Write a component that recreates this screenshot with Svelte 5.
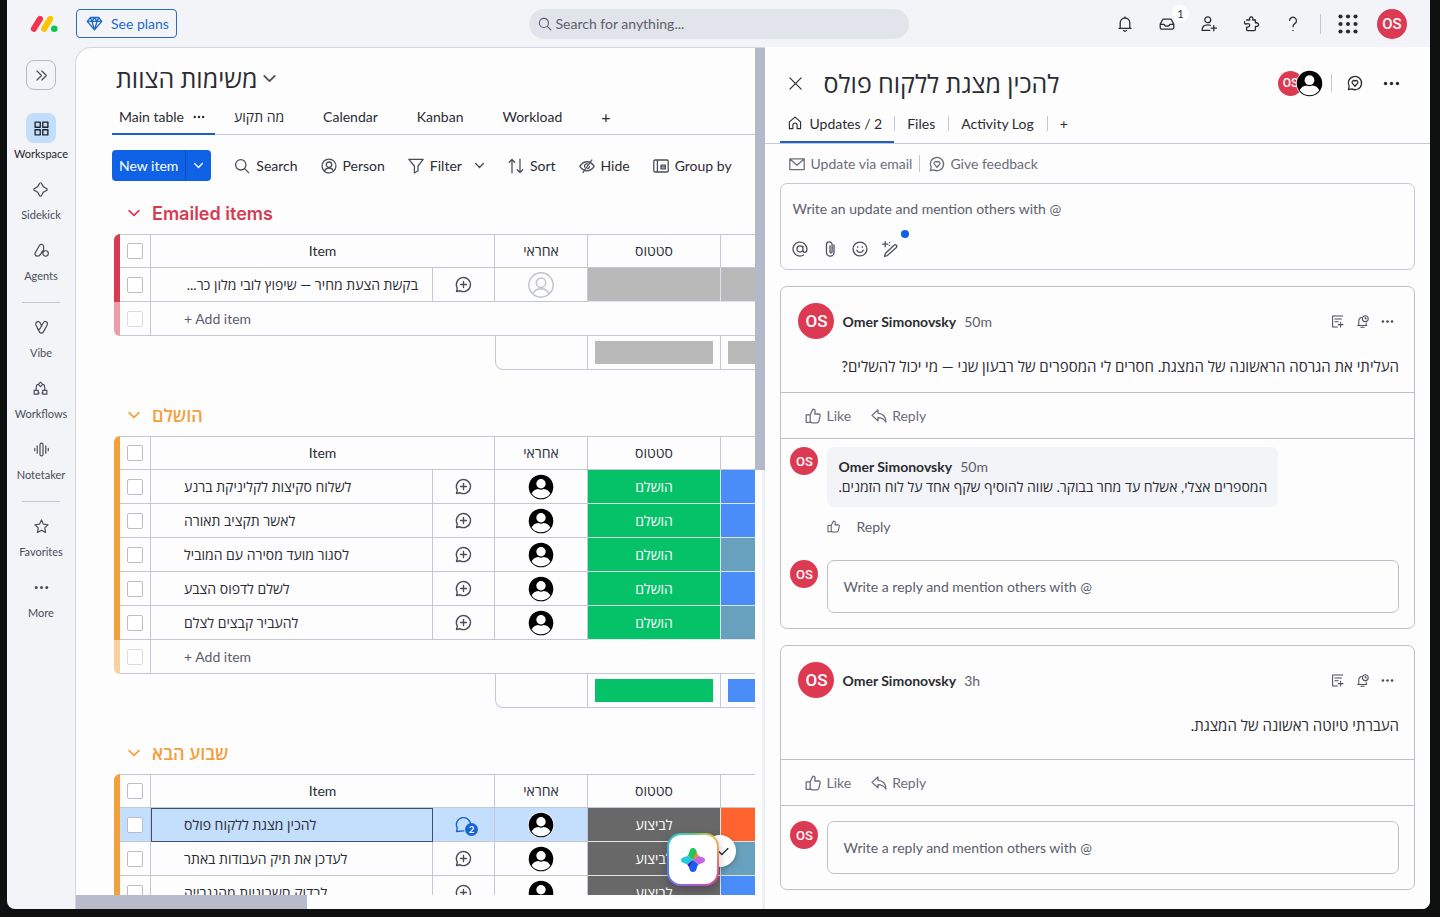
<script lang="ts">
  interface Row {
    name: string;
    status: string;
    statusColor: string;
    priority: string;
    unassigned?: boolean;
    rtl?: boolean;
    updates?: number;
  }

  interface Group {
    title: string;
    color: string;
    faded: string;
    rows: Row[];
  }

  interface Post {
    id: string;
    time: string;
    text: string;
    replies: Array<{ time: string; text: string }>;
  }

  const GREEN = '#05c167';
  const BLUE = '#4b8df8';
  const TEAL = '#68a1bd';
  const GREY = '#b9b9b9';
  const DARK = '#686868';
  const ORANGE = '#ff642e';

  const icons: Record<string, string> = {
    chevron: 'M3 6.500l7 7 7-7',
    expand: 'M4 4l6 6-6 6M10.500 4l6 6-6 6',
    grid: 'M2.500 2.500h6v6h-6zM11.500 2.500h6v6h-6zM2.500 11.500h6v6h-6zM11.500 11.500h6v6h-6z',
    sparkle: 'M10 1c1 0 1.500.7 1.900 2 .7 2.600 2.500 4.400 5.100 5.100 1.300.4 2 .9 2 1.900s-.7 1.500-2 1.900c-2.600.7-4.400 2.500-5.100 5.100-.4 1.300-.9 2-1.900 2s-1.500-.7-1.900-2c-.7-2.600-2.500-4.400-5.100-5.100-1.300-.4-2-.9-2-1.900s.7-1.500 2-1.900c2.600-.7 4.400-2.500 5.100-5.100.4-1.300.9-2 1.900-2z',
    agents: 'M2 12.500L7.200 3.300a3 3 0 0 1 5.600 1.500v5.400M2 12.500a3.100 3.100 0 0 0 2.600 5c2.200 0 3.500-1.200 4.500-3l1.900-3.300M15.500 10.300a3.600 3.600 0 1 0 0 7.200 3.600 3.600 0 0 0 0-7.200zM11.900 14V10.200',
    vibe: 'M10.400 8.200L8.300 4a3.100 3.100 0 0 0-5.700 2.700l4.700 9.100a3 3 0 0 0 5.300 0l5-9.200a3 3 0 0 0-5.200-3L7.700 12a2 2 0 0 1-3.200-.3',
    workflows: 'M10 1.500l3 3-3 3-3-3zM1.500 12.500h5.500v5h-5.500zM13 12.500h5.500v5h-5.500zM7 4.500c-2.200 0-2.800 1-2.800 8M13 4.500c2.200 0 2.800 1 2.800 8M7 16h1.500M11.500 16h1.500',
    notetaker: 'M1 8.500v3M4.300 5v10M15.700 5v10M19 8.500v3M8 3.500a2 2 0 0 1 4 0v13a2 2 0 0 1-4 0z',
    star: 'M10 1.300l2.700 5.600 6 .8-4.400 4.200 1.100 6.100-5.400-3-5.400 3 1.100-6.100L1.300 7.700l6-.8z',
    search: 'M8.500 2a6.500 6.500 0 1 0 0 13 6.500 6.500 0 0 0 0-13zM13.300 13.300l5 5',
    diamond: 'M5 3h10l3.500 4.500L10 17.500 1.500 7.500zM1.500 7.500h17M7 7.500l3 10 3-10M5 3l2 4.500L10 3l3 4.500L15 3',
    bell: 'M2.500 15.500h15M4 15.500V8.500a6 6 0 0 1 12 0V15.500M10 1v1.500M8 18c1 1 3 1 4 0',
    inbox: 'M1.500 10.500L4.200 5A2 2 0 0 1 6 3.800h8a2 2 0 0 1 1.800 1.200l2.700 5.500v4a2 2 0 0 1-2 2h-13a2 2 0 0 1-2-2zM1.500 10.500h5c.5 3 6.500 3 7 0h5',
    invite: 'M8.500 1a3.700 3.700 0 1 0 0 7.400 3.700 3.700 0 0 0 0-7.400zM11 18H1.300c0-4.300 2.900-7 7.200-7 1.300 0 2.300.2 3.200.6M16 12v6.500M12.800 15.200h6.500',
    puzzle: 'M4.500 5h4c-1-2 .1-4 1.800-4s2.800 2 1.800 4h3.400v3.600c2.200-.6 4 .6 4 2.200s-1.800 2.700-4 2.200V17c0 .8-.5 1.300-1.300 1.300H5.800c-.8 0-1.300-.5-1.300-1.300v-3.200c2.500.5 3.800-.7 3.800-2.300S6.800 9 4.500 9.800C2.300 10.500 1.500 9 2 7',
    help: 'M5.700 5.500a4.300 4.300 0 1 1 6.500 4c-1.600 1-2.200 1.700-2.200 3.900M10 18v.1',
    chatHeart: 'M1.800 18.200l.9-4A8.300 8.300 0 1 1 6 17.400zM10 14L6.600 10.200A2.200 2.200 0 0 1 10 7.500a2.200 2.200 0 0 1 3.400 2.700z',
    chatPlus: 'M1.800 18.200l.9-4A8.300 8.300 0 1 1 6 17.400zM10 6.500v7M6.500 10h7',
    chat: 'M10.500 17.500l-8.700.7.9-4a8.300 8.300 0 1 1 15.400-2.500',
    close: 'M2.500 2.500l15 15M17.500 2.500l-15 15',
    person: 'M10 1.300a8.700 8.700 0 1 0 0 17.400 8.700 8.700 0 0 0 0-17.400zM10 5a3.400 3.400 0 1 0 0 6.800A3.400 3.400 0 0 0 10 5zM4.200 16.400c1-2.700 3-3.700 5.800-3.700s4.800 1 5.800 3.700',
    filter: 'M1 1.700h18l-6.500 8.300v6L8 18.700V10z',
    sort: 'M5 18.500V1.800M1.500 5.300L5 1.800l3.500 3.500M15 1.500v16.700M11.500 14.700l3.500 3.500 3.500-3.500',
    hide: 'M1 10.500C3.500 6.500 6.700 4.700 10 4.700s6.500 1.800 9 5.800c-2.500 3.700-5.700 5.500-9 5.500s-6.500-1.800-9-5.500zM16 2.500L5 18M10.500 7.300a3 3 0 0 0-3.300 4.200M13 10.500c0 1.500-.8 2.500-2 2.900',
    groupBy: 'M2.500 2.500h15A1.500 1.500 0 0 1 19 4v12a1.500 1.500 0 0 1-1.500 1.500h-15A1.500 1.500 0 0 1 1 16V4a1.500 1.500 0 0 1 1.500-1.500zM5.500 2.500v15M10 9h5.500v4.500H10zM10 11.200h5.500',
    home: 'M2 8.500L10 1.500l8 7V18h-5v-5a3 3 0 0 0-6 0v5H2z',
    mail: 'M1 3.500h18v13.500H1zM1.500 4l8.500 7.500L18.500 4',
    mention: 'M13.700 6.500v5c0 1.700.8 2.600 2 2.600 1.700 0 3-1.700 3-4.100A8.700 8.700 0 1 0 14.500 17.500M10 6.200a3.800 3.800 0 1 0 0 7.600 3.800 3.800 0 0 0 0-7.600z',
    clip: 'M10 6v7.500a1.300 1.300 0 0 0 2.600 0v-9a3.500 3.500 0 0 0-7 0v9.800a4.700 4.700 0 0 0 9.400 0V5',
    smile: 'M10 1.300a8.700 8.700 0 1 0 0 17.400 8.700 8.700 0 0 0 0-17.400zM6 11.500c.8 2 2.200 2.800 4 2.800s3.200-.8 4-2.800M7.200 7.200v.6M12.800 7.200v.6',
    magic: 'M6.500 18.300l-3.300.9.900-3.500L15 5.300a2 2 0 0 1 2.900 2.800zM4 .8v6.400M.8 4h6.400M9.500 2v.1M9 5.500v.1',
    like: 'M6.500 8.500L9.800 1.500c2 0 3 1 2.800 3L12.300 7.500h4.800c1.400 0 2.100 1 1.800 2.300l-1.500 6.700c-.3 1.300-1.100 2-2.400 2H8.500l-2-1.500zM6.500 8.500H1.500v9.500h5z',
    reply: 'M8.700 2.500L1.200 9.200l7.500 6.700v-3.800c4.500 0 7.500 1.400 10.100 5.500-.3-6.500-4-10.600-10.100-11.200z',
    note: 'M10 18.500H2.500V1.500H18M6 6h10M6 10.500h5M14.800 11v7.500M11 14.800h7.500',
    remind: 'M2.500 16h14M4.300 16V9a5.500 5.500 0 0 1 4-5.300M7.500 19h5M14.300 1.200a4.500 4.500 0 1 0 0 9 4.500 4.500 0 0 0 0-9zM14.300 3.500v2.300h1.700M15.700 12.500V16',
    check: 'M2 10.500l5 5L18 4.500'
  };

  const topActions = [
    { icon: 'bell', label: 'Notifications' },
    { icon: 'inbox', label: 'Update feed', badge: 1 },
    { icon: 'invite', label: 'Invite members' },
    { icon: 'puzzle', label: 'Apps' },
    { icon: 'help', label: 'Help' }
  ];

  const navSections = [
    [
      { icon: 'grid', label: 'Workspace' },
      { icon: 'sparkle', label: 'Sidekick' },
      { icon: 'agents', label: 'Agents' }
    ],
    [
      { icon: 'vibe', label: 'Vibe' },
      { icon: 'workflows', label: 'Workflows' },
      { icon: 'notetaker', label: 'Notetaker' }
    ],
    [
      { icon: 'star', label: 'Favorites' },
      { icon: 'dots', label: 'More' }
    ]
  ];

  const views = ['Main table', 'מה תקוע', 'Calendar', 'Kanban', 'Workload'];

  const tools = [
    { icon: 'search', label: 'Search' },
    { icon: 'person', label: 'Person' },
    { icon: 'filter', label: 'Filter', menu: true },
    { icon: 'sort', label: 'Sort' },
    { icon: 'hide', label: 'Hide' },
    { icon: 'groupBy', label: 'Group by' }
  ];

  function done(name: string, priority: string): Row {
    return { name, status: 'הושלם', statusColor: GREEN, priority };
  }

  function todo(name: string, priority: string, updates = 0): Row {
    return { name, status: 'לביצוע', statusColor: DARK, priority, updates };
  }

  const groups: Group[] = [
    {
      title: 'Emailed items',
      color: '#d83a52',
      faded: '#eb9ca8',
      rows: [
        {
          name: 'בקשת הצעת מחיר — שיפוץ לובי מלון כר...',
          status: '',
          statusColor: GREY,
          priority: GREY,
          unassigned: true,
          rtl: true
        }
      ]
    },
    {
      title: 'הושלם',
      color: '#f2a03d',
      faded: '#fbd0a0',
      rows: [
        done('לשלוח סקיצות לקליניקת ברנע', BLUE),
        done('לאשר תקציב תאורה', BLUE),
        done('לסגור מועד מסירה עם המוביל', TEAL),
        done('לשלם לדפוס הצבע', BLUE),
        done('להעביר קבצים לצלם', TEAL)
      ]
    },
    {
      title: 'שבוע הבא',
      color: '#f2a03d',
      faded: '#fbd0a0',
      rows: [
        todo('להכין מצגת ללקוח פולס', ORANGE, 2),
        todo('לעדכן את תיק העבודות באתר', TEAL),
        todo('לבדוק חשבוניות מהנגרייה', BLUE)
      ]
    }
  ];

  const posts: Post[] = [
    {
      id: 'post-1',
      time: '50m',
      text: 'העליתי את הגרסה הראשונה של המצגת. חסרים לי המספרים של רבעון שני — מי יכול להשלים?',
      replies: [
        { time: '50m', text: 'המספרים אצלי, אשלח עד מחר בבוקר. שווה להוסיף שקף אחד על לוח הזמנים.' }
      ]
    },
    {
      id: 'post-2',
      time: '3h',
      text: 'העברתי טיוטה ראשונה של המצגת.',
      replies: []
    }
  ];

  let activeNav = 'Workspace';
  let activeView = 'Main table';
</script>

{#snippet icon(name, size = 16)}
  <svg class="icon" class:heavy={name === 'chevron' || name === 'check'} width={size} height={size} viewBox="0 0 20 20" aria-hidden="true">
    {#if name === 'dots'}
      <g fill="currentColor" stroke="none">
        <circle cx="3" cy="10" r="2" />
        <circle cx="10" cy="10" r="2" />
        <circle cx="17" cy="10" r="2" />
      </g>
    {:else}
      <path d={icons[name]} />
    {/if}
  </svg>
{/snippet}

{#snippet photo(size)}
  <svg class="photo" width={size} height={size} viewBox="0 0 26 26" role="img" aria-label="Assignee">
    <circle cx="13" cy="13" r="13" fill="#fff" />
    <circle cx="13" cy="13" r="12.300" fill="#000" />
    <circle cx="13" cy="9.800" r="4.700" fill="#fff" />
    <path d="M3.600 19.500c1.600-3.600 4.400-4.300 6.800-4.600 1.600 1 3.600 1 5.200 0 2.400.3 5.200 1 6.800 4.600A11.500 11.500 0 0 1 13 24.300a11.500 11.500 0 0 1-9.400-4.800z" fill="#fff" />
  </svg>
{/snippet}

<div class="window">
  <header class="topbar">
    <div class="brand">
      <svg width="28" height="18" viewBox="0 0 28 18" role="img" aria-label="monday">
        <path d="M3.800 13.800L10 3.800" stroke="#f0344f" stroke-width="6" stroke-linecap="round" />
        <path d="M14 13.800l6.200-10" stroke="#ffc400" stroke-width="6" stroke-linecap="round" />
        <circle cx="24.300" cy="13.800" r="3.300" fill="#10c64f" />
      </svg>
      <button class="plans">{@render icon('diamond', 17)}See plans</button>
    </div>
    <label class="global-search">
      {@render icon('search', 14)}
      <input type="search" placeholder="Search for anything..." aria-label="Search for anything" />
    </label>
    <div class="top-actions">
      {#each topActions as action}
        <button class="icon-btn" aria-label={action.label}>
          {@render icon(action.icon, 16)}
          {#if action.badge}
            <span class="count">{action.badge}</span>
          {/if}
        </button>
      {/each}
      <span class="top-divider"></span>
      <button class="apps" aria-label="Products">
        <svg width="20" height="20" viewBox="0 0 20 20" fill="currentColor">
          {#each [2.5, 10, 17.5] as cy}
            {#each [2.5, 10, 17.5] as cx}
              <circle {cx} {cy} r="2.100" />
            {/each}
          {/each}
        </svg>
      </button>
      <span class="avatar avatar-30">OS</span>
    </div>
  </header>

  <div class="body">
    <nav class="sidebar">
      <button class="expand" aria-label="Expand navigation">{@render icon('expand', 15)}</button>
      {#each navSections as section, i}
        {#if i > 0}
          <hr />
        {/if}
        {#each section as item}
          <button class="nav-item" class:active={activeNav === item.label} on:click={() => (activeNav = item.label)}>
            <span class="nav-icon">{@render icon(item.icon, item.icon === 'grid' ? 17 : 15)}</span>
            {item.label}
          </button>
        {/each}
      {/each}
    </nav>

    <main class="board">
      <div class="board-main">
        <div class="board-content">
          <h1>משימות הצוות <button class="plain" aria-label="Board menu">{@render icon('chevron', 15)}</button></h1>

          <div class="views">
            {#each views as view}
              <button class="view" class:active={activeView === view} on:click={() => (activeView = view)}>
                {view}
                {#if activeView === view}
                  {@render icon('dots', 12)}
                {/if}
              </button>
            {/each}
            <button class="view add" aria-label="Add view">+</button>
          </div>

          <div class="toolbar">
            <div class="new-item">
              <button>New item</button>
              <button class="new-menu" aria-label="More item options">{@render icon('chevron', 11)}</button>
            </div>
            {#each tools as tool}
              <button class="tool">
                {@render icon(tool.icon, 16)}
                {tool.label}
                {#if tool.menu}
                  <span class="tool-menu">{@render icon('chevron', 11)}</span>
                {/if}
              </button>
            {/each}
          </div>

          {#each groups as group}
            <section class="group" style="--group: {group.color}; --faded: {group.faded}">
              <h2>
                <button class="plain" aria-label="Collapse group">{@render icon('chevron', 14)}</button>
                {group.title}
              </h2>
              <table>
                <colgroup>
                  <col class="c-accent" />
                  <col class="c-check" />
                  <col class="c-name" />
                  <col class="c-chat" />
                  <col class="c-owner" />
                  <col class="c-status" />
                  <col class="c-status" />
                </colgroup>
                <thead>
                  <tr>
                    <td class="accent"></td>
                    <td class="check"><input type="checkbox" aria-label="Select all" /></td>
                    <th colspan="2">Item</th>
                    <th>אחראי</th>
                    <th>סטטוס</th>
                    <th></th>
                  </tr>
                </thead>
                <tbody>
                  {#each group.rows as row}
                    <tr class:selected={row.updates}>
                      <td class="accent"></td>
                      <td class="check"><input type="checkbox" aria-label={row.name} /></td>
                      <td class="name" class:rtl={row.rtl}>{row.name}</td>
                      <td class="chat">
                        <button class="plain" aria-label="Updates">
                          {#if row.updates}
                            {@render icon('chat', 17)}
                            <span class="updates">{row.updates}</span>
                          {:else}
                            {@render icon('chatPlus', 17)}
                          {/if}
                        </button>
                      </td>
                      <td class="owner">
                        {#if row.unassigned}
                          <span class="nobody">{@render icon('person', 28)}</span>
                        {:else}
                          {@render photo(26)}
                        {/if}
                      </td>
                      <td class="status" style="background: {row.statusColor}">{row.status}</td>
                      <td class="status" style="background: {row.priority}"></td>
                    </tr>
                  {/each}
                  <tr class="add-row">
                    <td class="accent"></td>
                    <td class="check"><input type="checkbox" disabled aria-label="New item" /></td>
                    <td class="add-cell" colspan="5"><button class="plain">+ Add item</button></td>
                  </tr>
                </tbody>
                <tfoot>
                  <tr>
                    <td class="blank" colspan="4"></td>
                    <td class="summary-first"></td>
                    <td><div class="bar" style="background: {group.rows[0].statusColor}"></div></td>
                    <td><div class="bar" style="background: {group.rows[0].priority}"></div></td>
                  </tr>
                </tfoot>
              </table>
            </section>
          {/each}
        </div>
        <div class="hbar"><div class="hthumb"></div></div>
      </div>
      <div class="vbar"><div class="vthumb"></div></div>

      <div class="floating">
        <button class="done" aria-label="Mark as done">{@render icon('check', 11)}</button>
        <button class="assistant" aria-label="Sidekick">
          <svg width="26" height="26" viewBox="0 0 26 26">
            <path d="M13 1c2.400 0 3.200 1.700 3.800 4.300.4 1.700 1 2.800 1.800 3.500L13 13 7.400 8.800c.8-.7 1.400-1.800 1.800-3.500C9.800 2.700 10.600 1 13 1z" fill="#22c55e" />
            <path d="M13 13l5.600-4.200c.7.600 1.600.9 2.600 1.100 2.600.4 3.800 1.300 3.800 3.100s-1.300 2.800-3.800 3.400c-1 .2-1.900.6-2.600 1.200z" fill="#c861e6" />
            <path d="M7.400 8.800L13 13l-5.600 4.600c-.7-.6-1.600-1-2.600-1.200C2.300 15.800 1 14.800 1 13s1.200-2.700 3.800-3.100c1-.2 1.900-.5 2.600-1.100z" fill="#22c7e0" />
            <path d="M13 13l5.600 4.600c-.8.7-1.400 1.700-1.800 3.300-.6 2.600-1.400 4.100-3.800 4.100s-3.200-1.500-3.800-4.100c-.4-1.600-1-2.600-1.800-3.300z" fill="#1f5cf0" />
            <path d="M13 13l3.500-8.600c.5 2.400 1.200 3.600 2.100 4.400z" fill="#f08a24" />
            <path d="M13 13l-5.600 4.600c.7.600 1.300 1.500 1.600 2.700L13 13z" fill="#3f1fb8" />
          </svg>
        </button>
      </div>
    </main>

    <aside class="panel">
      <div class="panel-head">
        <button class="plain" aria-label="Close">{@render icon('close', 15)}</button>
        <h2>להכין מצגת ללקוח פולס</h2>
        <div class="members">
          <span class="avatar avatar-25">OS</span>
          {@render photo(27)}
        </div>
        <span class="head-divider"></span>
        <button class="plain feedback" aria-label="Give feedback">{@render icon('chatHeart', 16)}</button>
        <button class="plain" aria-label="Item menu">{@render icon('dots', 17)}</button>
      </div>

      <div class="panel-tabs">
        <button class="tab active">{@render icon('home', 14)}Updates / 2</button>
        <button class="tab">Files</button>
        <button class="tab">Activity Log</button>
        <button class="tab" aria-label="Add tab">+</button>
      </div>

      <div class="panel-body">
        <div class="links">
          <button class="plain">{@render icon('mail', 16)}Update via email</button>
          <button class="plain">{@render icon('chatHeart', 16)}Give feedback</button>
        </div>

        <div class="composer">
          <textarea rows="1" placeholder="Write an update and mention others with @" aria-label="Write an update"></textarea>
          <div class="composer-tools">
            <button class="plain" aria-label="Mention">{@render icon('mention', 16)}</button>
            <button class="plain" aria-label="Attach file">{@render icon('clip', 16)}</button>
            <button class="plain" aria-label="Emoji">{@render icon('smile', 16)}</button>
            <button class="plain magic" aria-label="Writing assistant">{@render icon('magic', 16)}</button>
          </div>
        </div>

        {#each posts as post}
          <article class="post">
            <header class="post-head">
              <span class="avatar avatar-36">OS</span>
              <strong>Omer Simonovsky</strong>
              <span class="time">{post.time}</span>
              <div class="post-tools">
                <button class="plain" aria-label="Create doc">{@render icon('note', 13)}</button>
                <button class="plain" aria-label="Remind me">{@render icon('remind', 13)}</button>
                <button class="plain" aria-label="Post menu">{@render icon('dots', 13)}</button>
              </div>
            </header>
            <p class="post-text" class:roomy={post.replies.length === 0} dir="rtl">{post.text}</p>
            <div class="post-actions">
              <button class="plain">{@render icon('like', 16)}Like</button>
              <button class="plain">{@render icon('reply', 16)}Reply</button>
            </div>
            {#each post.replies as reply}
              <div class="reply">
                <span class="avatar avatar-28">OS</span>
                <div>
                  <div class="bubble">
                    <strong>Omer Simonovsky</strong><span class="time">{reply.time}</span>
                    <p dir="rtl">{reply.text}</p>
                  </div>
                  <div class="reply-actions">
                    <button class="plain" aria-label="Like">{@render icon('like', 13)}</button>
                    <button class="plain">Reply</button>
                  </div>
                </div>
              </div>
            {/each}
            <div class="reply-box">
              <span class="avatar avatar-28">OS</span>
              <input type="text" id={post.id} placeholder="Write a reply and mention others with @" aria-label="Write a reply" />
            </div>
          </article>
        {/each}
      </div>
    </aside>
  </div>
</div>

<style>
  :global(body) {
    background: #0f1010;
  }

  .window {
    --line: #c5c8d4;
    --muted: #5c5e6c;
    --text: #2b2c32;
    --red: #dc3a52;
    display: flex;
    flex-direction: column;
    box-sizing: border-box;
    height: calc(100vh - 8px);
    margin: 0 10px 8px 7px;
    overflow: hidden;
    border-radius: 0 0 8px 8px;
    background: #f2f4f8;
    color: var(--text);
    font-family: Lato, 'Open Sans', sans-serif;
    font-size: 14px;
  }

  button,
  input,
  textarea {
    font: inherit;
    color: inherit;
  }

  button {
    display: inline-flex;
    align-items: center;
    padding: 0;
    border: none;
    background: none;
    cursor: pointer;
    white-space: nowrap;
  }

  h1,
  h2,
  p {
    margin: 0;
  }

  .icon {
    flex: none;
    fill: none;
    stroke: currentColor;
    stroke-width: 1.6;
    stroke-linecap: round;
    stroke-linejoin: round;
    overflow: visible;
  }

  .icon.heavy {
    stroke-width: 2.4;
  }

  .photo {
    display: block;
    flex: none;
  }

  .avatar {
    display: inline-flex;
    flex: none;
    align-items: center;
    justify-content: center;
    border-radius: 50%;
    background: var(--red);
    color: #fff;
    font-family: Roboto, sans-serif;
    font-weight: 500;
  }

  .avatar-25 { width: 25px; height: 25px; font-size: 12px; }
  .avatar-28 { width: 28px; height: 28px; font-size: 13px; }
  .avatar-30 { width: 30px; height: 30px; font-size: 15px; }
  .avatar-36 { width: 36px; height: 36px; font-size: 17px; }

  /* Top bar */
  .topbar {
    display: grid;
    grid-template-columns: 1fr minmax(200px, 380px) 1fr;
    align-items: center;
    flex: none;
    height: 47px;
    padding: 0 23px;
  }

  .brand {
    display: flex;
    align-items: center;
    gap: 18px;
  }

  .plans {
    gap: 8px;
    height: 29px;
    padding: 0 7px 0 9px;
    border: 1px solid #2a6cc4;
    border-radius: 4px;
    color: #1f68c9;
  }

  .global-search {
    display: flex;
    align-items: center;
    gap: 4px;
    height: 30px;
    padding: 0 9px;
    border-radius: 15px;
    background: #e1e4ea;
    color: var(--muted);
  }

  .global-search input {
    flex: 1;
    min-width: 0;
    padding: 0;
    border: none;
    outline: none;
    background: none;
  }

  input::placeholder,
  textarea::placeholder {
    color: var(--muted);
    opacity: 1;
  }

  .top-actions {
    display: flex;
    align-items: center;
    justify-content: flex-end;
  }

  .icon-btn {
    position: relative;
    justify-content: center;
    width: 22px;
    height: 22px;
    margin-left: 20px;
  }

  .count {
    position: absolute;
    top: -8px;
    right: -11px;
    width: 17px;
    height: 17px;
    border-radius: 9px;
    background: #fdfdfe;
    font-size: 11px;
    line-height: 17px;
    text-align: center;
  }

  .top-divider {
    width: 1px;
    height: 20px;
    margin: 0 17px 0 16px;
    background: var(--line);
  }

  .apps {
    margin-right: 19px;
  }

  /* Side navigation */
  .body {
    display: flex;
    flex: 1;
    min-height: 0;
  }

  .sidebar {
    display: flex;
    flex: none;
    flex-direction: column;
    align-items: center;
    width: 68px;
  }

  .expand {
    justify-content: center;
    box-sizing: border-box;
    width: 30px;
    height: 30px;
    margin: 13px 0 23px;
    border: 1px solid #b6b9c6;
    border-radius: 8px;
    color: #4b4d59;
    flex: none;
  }

  .nav-item {
    flex: none;
    flex-direction: column;
    padding-bottom: 12px;
    color: #4b4d59;
    font-size: 11px;
    line-height: 16px;
  }

  .nav-icon {
    display: flex;
    align-items: center;
    justify-content: center;
    width: 30px;
    height: 30px;
    margin-bottom: 3px;
    border-radius: 8px;
  }

  .nav-item.active {
    color: #222329;
  }

  .nav-item.active .nav-icon {
    background: #c3defc;
  }

  .sidebar hr {
    width: 38px;
    height: 1px;
    margin: 6px 0 9px;
    border: none;
    background: var(--line);
  }

  /* Board */
  .board {
    position: relative;
    display: flex;
    flex: 690 1 0;
    min-width: 0;
    box-sizing: border-box;
    overflow: hidden;
    border-top: 1px solid #d3d6e2;
    border-left: 1px solid #d3d6e2;
    border-radius: 16px 0 0 0;
    background: #fdfdfe;
  }

  .board-main {
    display: flex;
    flex: 1;
    flex-direction: column;
    min-width: 0;
  }

  .board-content {
    flex: 1;
    min-height: 0;
    padding: 10px 0 0 36px;
    overflow: hidden;
  }

  h1 {
    display: flex;
    align-items: center;
    gap: 5px;
    height: 40px;
    padding-left: 4px;
    font-size: 25px;
    font-weight: 500;
    white-space: nowrap;
  }

  h1 button {
    color: #4b4d59;
  }

  .views {
    display: flex;
    height: 36px;
    border-bottom: 1px solid var(--line);
  }

  .view {
    gap: 9px;
    height: 37px;
    box-sizing: border-box;
    padding: 0 20px 0 19px;
  }

  .view.active {
    padding: 2px 10px 0 7px;
    border-bottom: 2px solid #1f5fc4;
  }

  .view.add {
    font-size: 16px;
  }

  .toolbar {
    display: flex;
    align-items: center;
    gap: 23px;
    height: 31px;
    margin: 15px 0 20px;
  }

  .new-item {
    display: flex;
    flex: none;
    height: 31px;
    overflow: hidden;
    border-radius: 4px;
    background: #0f62e6;
    color: #fff;
  }

  .new-item button {
    padding: 0 7px;
  }

  .new-item .new-menu {
    border-left: 1px solid #0c4fba;
  }

  .tool {
    gap: 6px;
    flex: none;
  }

  .tool .icon {
    color: #4b4d59;
  }

  .tool-menu {
    display: flex;
    margin-left: 6px;
  }

  .group h2 {
    display: flex;
    align-items: center;
    gap: 11px;
    height: 24px;
    margin-bottom: 9px;
    padding-left: 15px;
    color: var(--group);
    font-family: Inter, 'Open Sans', sans-serif;
    font-size: 18px;
    font-weight: 600;
  }

  .group + .group {
    margin-top: 33px;
  }

  table {
    width: 740px;
    margin-left: 2px;
    border-spacing: 0;
    table-layout: fixed;
  }

  .c-accent { width: 6px; }
  .c-check { width: 31px; }
  .c-name { width: 282px; }
  .c-chat { width: 62px; }
  .c-owner { width: 93px; }
  .c-status { width: 133px; }

  td,
  th {
    box-sizing: border-box;
    height: 34px;
    padding: 0;
    border-right: 1px solid var(--line);
    border-bottom: 1px solid var(--line);
    font-weight: 400;
    line-height: 20px;
    text-align: center;
    white-space: nowrap;
  }

  thead td,
  thead th {
    border-top: 1px solid var(--line);
  }

  td.accent {
    border: none;
    background: var(--group);
  }

  thead .accent {
    border-radius: 6px 0 0 0;
  }

  .add-row .accent {
    border-radius: 0 0 0 6px;
    background: var(--faded);
  }

  .check input {
    display: block;
    box-sizing: border-box;
    width: 16px;
    height: 16px;
    margin: 0 auto;
    appearance: none;
    border: 1px solid #b9bcc9;
    border-radius: 2px;
    background: #fff;
  }

  .add-row .check input {
    opacity: 0.5;
  }

  td.name {
    padding: 0 14px 0 33px;
    overflow: hidden;
    text-align: left;
  }

  td.rtl {
    direction: rtl;
    text-align: right;
  }

  .add-cell {
    padding-left: 33px;
    color: var(--muted);
    text-align: left;
  }

  .chat button {
    position: relative;
    display: flex;
    margin: 0 auto;
    color: #4b4d59;
  }

  .updates {
    position: absolute;
    right: -6px;
    bottom: -3px;
    width: 13px;
    height: 13px;
    border-radius: 50%;
    background: #1565d8;
    color: #fff;
    font-size: 9px;
    font-weight: 700;
    line-height: 13px;
  }

  .owner .photo {
    margin: 0 auto;
  }

  .nobody {
    display: flex;
    justify-content: center;
    color: #c0c2cd;
  }

  .nobody .icon {
    stroke-width: 1;
  }

  .status {
    border-color: #dfe4ee;
    color: #fff;
    font-weight: 500;
  }

  .selected td:not(.accent, .status) {
    background: #c4defd;
  }

  .selected td.name {
    border: 1px solid #3d4f78;
    padding-left: 32px;
  }

  .selected .chat button {
    color: #1565d8;
  }

  tfoot td {
    padding: 0 7px;
    vertical-align: middle;
  }

  tfoot td.blank {
    border: none;
  }

  td.summary-first {
    border-left: 1px solid var(--line);
    border-radius: 0 0 0 8px;
  }

  .bar {
    height: 23px;
  }

  .hbar {
    flex: none;
    height: 14px;
  }

  .hthumb {
    width: 34%;
    height: 100%;
    background: #b8bbcb;
  }

  .vbar {
    flex: none;
    box-sizing: border-box;
    width: 10px;
    background: linear-gradient(90deg, #fdfdfe 60%, #e6e8ee);
  }

  .vthumb {
    height: 49%;
    background: #b3b9c8;
  }

  .floating {
    position: absolute;
    right: 46px;
    bottom: 23px;
  }

  .assistant {
    position: relative;
    justify-content: center;
    width: 52px;
    height: 53px;
    border: 2px solid transparent;
    border-radius: 14px;
    box-sizing: border-box;
    background:
      linear-gradient(#fff, #fff) padding-box,
      conic-gradient(#5fc98a, #e8c14a 12%, #e5488a 35%, #a45be0 50%, #4b7df5 70%, #35c2d0 88%, #5fc98a) border-box;
    box-shadow: 0 4px 10px rgba(0, 0, 0, 0.25);
  }

  .done {
    position: absolute;
    top: 2px;
    right: -17px;
    justify-content: flex-end;
    box-sizing: border-box;
    width: 32px;
    height: 32px;
    padding-right: 7px;
    border-radius: 50%;
    background: #fff;
    box-shadow: 0 2px 6px rgba(0, 0, 0, 0.25);
  }

  /* Item panel */
  .panel {
    display: flex;
    flex: 665 1 0;
    flex-direction: column;
    min-width: 0;
    background: #fdfdfe;
  }

  .panel-head {
    display: flex;
    align-items: center;
    height: 40px;
    padding: 16px 30px 0 23px;
  }

  .panel-head h2 {
    flex: 1;
    padding-left: 20px;
    font-size: 25px;
    font-weight: 500;
    line-height: 36px;
    white-space: nowrap;
  }

  .members {
    display: flex;
    align-items: center;
  }

  .members .photo {
    margin-left: -7px;
  }

  .head-divider {
    width: 1px;
    height: 18px;
    margin: 0 15px 0 8px;
    background: var(--line);
  }

  .feedback {
    margin-right: 20px;
  }

  .panel-tabs {
    display: flex;
    height: 40px;
    padding-left: 15px;
    border-bottom: 1px solid var(--line);
  }

  .tab {
    position: relative;
    gap: 7px;
    padding: 0 13px;
  }

  .tab.active {
    padding: 0 12px 0 8px;
    box-shadow: inset 0 -2px #1f5fc4;
  }

  .tab + .tab::before {
    content: '';
    position: absolute;
    left: 0;
    width: 1px;
    height: 15px;
    background: var(--line);
  }

  .panel-body {
    flex: 1;
    min-height: 0;
    padding: 0 15px;
    overflow: hidden;
  }

  .links {
    display: flex;
    align-items: center;
    height: 39px;
    padding-left: 9px;
    color: #6b6d7a;
  }

  .links button {
    gap: 5px;
  }

  .links button + button {
    margin-left: 7px;
    padding-left: 9px;
    border-left: 1px solid var(--line);
  }

  .composer {
    padding: 15px 11px 10px;
    border: 1px solid var(--line);
    border-radius: 7px;
  }

  textarea {
    display: block;
    box-sizing: border-box;
    width: 100%;
    height: 20px;
    margin-bottom: 20px;
    padding: 0;
    border: none;
    outline: none;
    background: none;
    line-height: 20px;
    resize: none;
  }

  .composer-tools {
    display: flex;
    gap: 14px;
    height: 20px;
    color: #4b4d59;
  }

  .magic {
    position: relative;
  }

  .magic::after {
    content: '';
    position: absolute;
    top: -9px;
    right: -11px;
    width: 8px;
    height: 8px;
    border-radius: 50%;
    background: #0f62e6;
  }

  .post {
    margin-top: 16px;
    border: 1px solid #bfc1ca;
    border-radius: 7px;
  }

  .post-head {
    display: flex;
    align-items: center;
    padding: 16px 20px 0 17px;
  }

  .post-head strong {
    margin-left: 8px;
  }

  .time {
    margin-left: 8px;
    color: var(--muted);
  }

  .post-tools {
    display: flex;
    gap: 12px;
    margin-left: auto;
    color: #4b4d59;
  }

  .post-text {
    padding: 17px 15px 16px;
    font-size: 15px;
    line-height: 20px;
  }

  .post-text.roomy {
    padding-bottom: 24px;
  }

  .post-actions {
    display: flex;
    align-items: center;
    gap: 20px;
    height: 45px;
    padding-left: 24px;
    border-top: 1px solid #bfc1ca;
    border-bottom: 1px solid #bfc1ca;
    color: #6b6d7a;
  }

  .post-actions button {
    gap: 5px;
  }

  .reply,
  .reply-box {
    display: flex;
    align-items: flex-start;
    gap: 9px;
    padding: 8px 15px 0 9px;
  }

  .bubble {
    padding: 10px 11px;
    border-radius: 7px;
    background: #f2f4f8;
    line-height: 20px;
  }

  .reply-actions {
    display: flex;
    gap: 16px;
    height: 38px;
    color: var(--muted);
  }

  .reply-box {
    padding: 15px 15px 15px 9px;
  }

  .reply-box input {
    flex: 1;
    min-width: 0;
    box-sizing: border-box;
    height: 53px;
    padding: 0 15px;
    border: 1px solid #bfc1ca;
    border-radius: 7px;
    outline: none;
    background: none;
  }
</style>
